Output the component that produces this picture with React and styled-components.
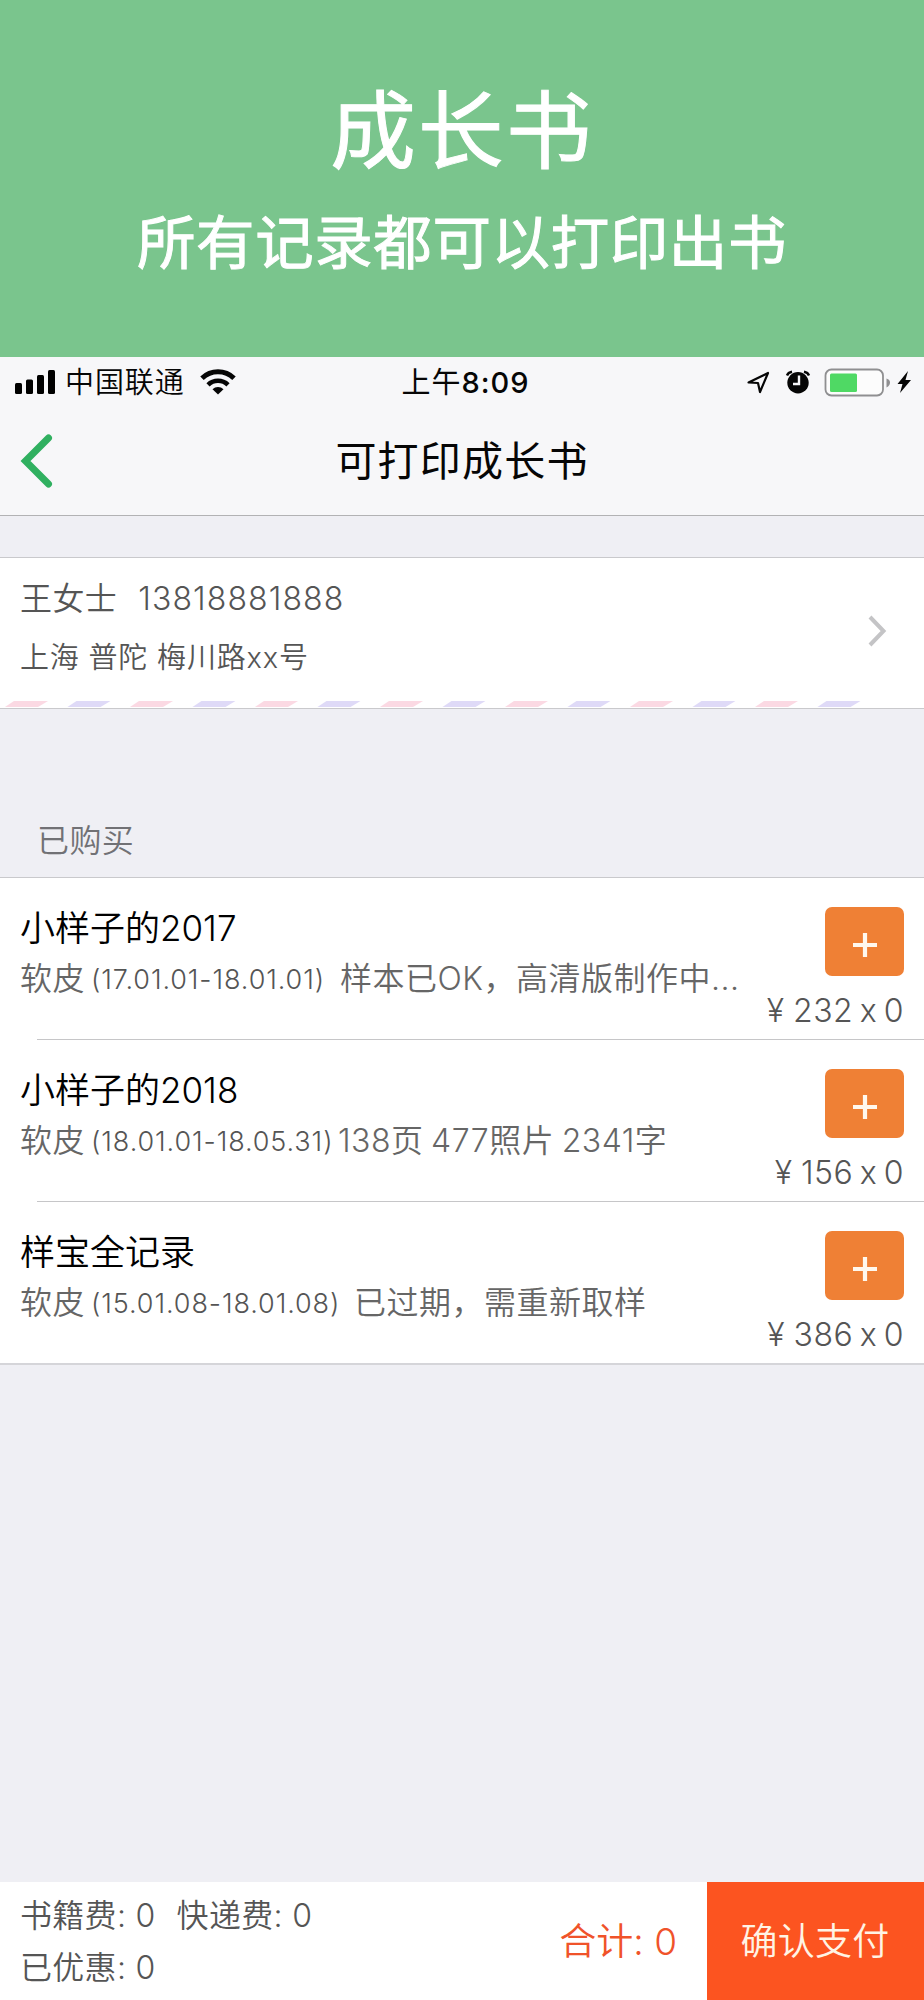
import React from "react";
import styled, { createGlobalStyle } from "styled-components";

const GlobalStyle = createGlobalStyle`
  * { box-sizing: border-box; }
  body {
    margin: 0;
    background: #efeff4;
    font-family: Inter, "Noto Sans CJK SC", sans-serif;
    font-weight: 350;
    font-feature-settings: "calt" 0;
  }
`;

const Page = styled.div`
  width: 924px;
  height: 2000px;
  display: flex;
  flex-direction: column;
  overflow: hidden;
  background: #efeff4;
  color: #555;
`;

const Banner = styled.header`
  height: 357px;
  flex: none;
  padding-top: 61px;
  background: #7ac58d;
  color: #fff;
  text-align: center;
  font-family: "Noto Sans CJK SC", sans-serif;
  font-weight: 400;
  -webkit-text-stroke: 1px #fff;
`;

const BannerTitle = styled.h1`
  margin: 0;
  font-size: 85.5px;
  line-height: 128px;
  letter-spacing: 2.4px;
  font-weight: inherit;
`;

const BannerSubtitle = styled.p`
  margin: 2px 0 0;
  font-size: 58.5px;
  line-height: 96px;
  letter-spacing: 0.6px;
`;

const TopBars = styled.div`
  height: 159px;
  flex: none;
  background: #f7f7f9;
  border-bottom: 1px solid #b2b2b4;
  color: #060606;
`;

const StatusBar = styled.div`
  height: 50px;
  display: grid;
  grid-template-columns: 1fr auto 1fr;
  align-items: center;
  padding: 0 12px 0 15px;
`;

const StatusGroup = styled.div`
  display: flex;
  align-items: center;
  justify-content: ${(p) => (p.$end ? "flex-end" : "flex-start")};
`;

const Carrier = styled.span`
  margin: 0 15px 0 9px;
  padding-top: 2px;
  font-size: 29px;
  line-height: 48px;
  letter-spacing: 0.9px;
`;

const Clock = styled.span`
  padding: 1px 0 0 4px;
  font-size: 29px;
  line-height: 49px;
  letter-spacing: 1px;
  font-weight: 500;
`;

const ClockPrefix = styled.span`
  font-weight: 400;
`;

const NavBar = styled.div`
  height: 108px;
  display: grid;
  grid-template-columns: 60px 1fr 60px;
  align-items: center;
`;

const BackIcon = styled.svg`
  margin: -1px 0 0 19px;
  display: block;
`;

const NavTitle = styled.h2`
  margin: 0;
  font-size: 41px;
  line-height: 108px;
  letter-spacing: 1.2px;
  font-weight: 400;
  text-align: center;
`;

const AddressCard = styled.section`
  height: 152px;
  flex: none;
  margin-top: 41px;
  background: #fff;
  border-top: 1px solid #c9c9cc;
  border-bottom: 1px solid #c9c9cc;
  display: flex;
  flex-direction: column;
`;

const AddressBody = styled.div`
  height: 143px;
  display: flex;
  align-items: center;
  justify-content: space-between;
  padding: 3px 37px 0 20px;
`;

const AddressText = styled.div`
  padding-bottom: 5px;
`;

const Recipient = styled.div`
  font-size: 32px;
  line-height: 58px;
  letter-spacing: 0.4px;
`;

const Phone = styled.span`
  margin-left: 21px;
  letter-spacing: 1.1px;
`;

const Street = styled.div`
  font-size: 29px;
  line-height: 59px;
  letter-spacing: 0.8px;
`;

const EnvelopeEdge = styled.svg`
  display: block;
`;

const SectionHeader = styled.h3`
  height: 168px;
  flex: none;
  margin: 0;
  padding: 108px 0 0 37px;
  font-size: 32px;
  line-height: 48px;
  letter-spacing: 0.4px;
  font-weight: 350;
  color: #717175;
`;

const BookList = styled.ul`
  margin: 0;
  padding: 0;
  flex: none;
  list-style: none;
  background: #fff;
  border-top: 1px solid #c9c9cc;
  border-bottom: 2px solid #d5d5d9;
`;

const BookRow = styled.li`
  height: 161px;
  display: flex;
  justify-content: space-between;
  padding: 23px 20px 0;
`;

const Divider = styled.li`
  height: 1px;
  margin-left: 37px;
  background: #c6c6c8;
`;

const BookInfo = styled.div`
  padding-top: 2px;
`;

const BookTitle = styled.div`
  font-size: 35px;
  line-height: 50px;
  color: #000;
`;

const BookDetail = styled.div`
  display: flex;
  align-items: baseline;
  margin-top: 1px;
  font-size: 32px;
  line-height: 50px;
  letter-spacing: 0.5px;
  word-spacing: -2px;
  color: #666;
  white-space: nowrap;
`;

const DateRange = styled.span`
  width: ${(p) => p.$width}px;
  margin-left: 6px;
  align-self: flex-start;
  font-size: 27px;
  line-height: 51px;
  letter-spacing: 0.9px;
  color: #555;
`;

const BookActions = styled.div`
  display: flex;
  flex-direction: column;
  align-items: flex-end;
  flex: none;
  width: 150px;
  margin-left: -150px;
  padding-top: 6px;
`;

const AddButton = styled.button`
  width: 79px;
  height: 69px;
  padding: 7px 0 0;
  border: 0;
  border-radius: 7px;
  background: #ef8035;
  display: flex;
  align-items: center;
  justify-content: center;
`;

const Price = styled.div`
  margin-top: 12px;
  font-size: 32px;
  line-height: 46px;
  letter-spacing: 0.5px;
  word-spacing: -3px;
  white-space: nowrap;
`;

const Currency = styled.span`
  margin-right: 2px;
`;

const Footer = styled.footer`
  height: 118px;
  flex: none;
  margin-top: auto;
  display: flex;
  background: #fff;
`;

const Fees = styled.div`
  flex: 1;
  padding: 8px 0 0 20px;
  font-size: 32px;
  line-height: 52px;
  letter-spacing: 0.3px;
`;

const FeeItem = styled.span`
  margin-right: 21px;
`;

const Total = styled.div`
  padding: 2px 30px 0 0;
  font-size: 37px;
  line-height: 116px;
  color: #f0532a;
`;

const PayButton = styled.button`
  width: 217px;
  padding: 2px 1px 0 0;
  border: 0;
  background: #fc5420;
  color: #fff3e4;
  font: inherit;
  font-size: 37px;
  line-height: 116px;
  letter-spacing: 0.3px;
`;

const BOOKS = [
  { title: "小样子的2017", dates: "(17.01.01-18.01.01)", datesWidth: 249, detail: "样本已OK，高清版制作中...", price: 232 },
  { title: "小样子的2018", dates: "(18.01.01-18.05.31)", datesWidth: 247, detail: "138页 477照片 2341字", price: 156 },
  { title: "样宝全记录", dates: "(15.01.08-18.01.08)", datesWidth: 263, detail: "已过期，需重新取样", price: 386 },
];

const STRIPES = Array.from({ length: 14 }, (_, i) => i);

function SignalIcon() {
  return (
    <svg width="41" height="26" viewBox="0 0 41 26">
      <rect x="0" y="14" width="7" height="11" rx="1.5" />
      <rect x="11" y="10.500" width="7" height="14.500" rx="1.500" />
      <rect x="22" y="6" width="7" height="19" rx="1.5" />
      <rect x="33" y="1" width="7" height="24" rx="1.5" />
    </svg>
  );
}

function WifiIcon() {
  return (
    <svg width="36" height="26" viewBox="0 0 36 26" fill="none" stroke="#060606">
      <path d="M2 9.200A23 23 0 0 1 34 9.200" strokeWidth="5" />
      <path d="M8 15.800A14.500 14.500 0 0 1 28 15.800" strokeWidth="4.600" />
      <path d="M12.500 20.200A8 8 0 0 1 23.500 20.200L18 25.500Z" fill="#060606" stroke="none" />
    </svg>
  );
}

function StatusIcons() {
  return (
    <svg width="165" height="30" viewBox="748 367 165 30">
      <path d="M749.500 382.500L769 373L761 392L759 383Z" fill="none" stroke="#060606" strokeWidth="2.200" strokeLinejoin="round" />
      <circle cx="799" cy="382.700" r="10.700" fill="#060606" />
      <path d="M788 375.500Q789 372.500 793 371.700M810 375.500Q809 372.500 805 371.700" fill="none" stroke="#060606" strokeWidth="2.400" />
      <path d="M800 375.500V384H794" fill="none" stroke="#f7f7f9" strokeWidth="2.400" />
      <rect x="826.500" y="369.500" width="57.500" height="26" rx="6" fill="#fcfcfc" stroke="#8f8f91" strokeWidth="1.800" />
      <rect x="831" y="373.500" width="27" height="18.500" rx="1.500" fill="#4fd964" />
      <path d="M887.500 378.500Q891 379.500 891 382.500T887.500 387.500Z" fill="#8f8f91" />
      <path d="M909 371L898.500 384H903.500L901 393L912 380H906.500Z" fill="#060606" />
    </svg>
  );
}

function Book({ book }) {
  return (
    <BookRow>
      <BookInfo>
        <BookTitle>{book.title}</BookTitle>
        <BookDetail>
          <span>软皮</span>
          <DateRange $width={book.datesWidth}>{book.dates}</DateRange>
          <span>{book.detail}</span>
        </BookDetail>
      </BookInfo>
      <BookActions>
        <AddButton aria-label="添加">
          <svg width="24" height="24" viewBox="0 0 24 24">
            <path d="M12 0V24M0 12H24" stroke="#fff8ee" strokeWidth="4.200" />
          </svg>
        </AddButton>
        <Price>
          <Currency>¥</Currency> {book.price} x 0
        </Price>
      </BookActions>
    </BookRow>
  );
}

export default function App() {
  return (
    <Page>
      <GlobalStyle />
      <Banner>
        <BannerTitle>成长书</BannerTitle>
        <BannerSubtitle>所有记录都可以打印出书</BannerSubtitle>
      </Banner>
      <TopBars>
        <StatusBar>
          <StatusGroup>
            <SignalIcon />
            <Carrier>中国联通</Carrier>
            <WifiIcon />
          </StatusGroup>
          <Clock>
            <ClockPrefix>上午</ClockPrefix>8:09
          </Clock>
          <StatusGroup $end>
            <StatusIcons />
          </StatusGroup>
        </StatusBar>
        <NavBar>
          <BackIcon width="36" height="54" viewBox="0 0 36 54">
            <path d="M29.500 4L6.500 27L29.500 50" fill="none" stroke="#30b060" strokeWidth="7" strokeLinecap="round" />
          </BackIcon>
          <NavTitle>可打印成长书</NavTitle>
        </NavBar>
      </TopBars>
      <AddressCard>
        <AddressBody>
          <AddressText>
            <Recipient>
              王女士<Phone>13818881888</Phone>
            </Recipient>
            <Street>上海 普陀 梅川路xx号</Street>
          </AddressText>
          <svg width="20" height="34" viewBox="0 0 20 34">
            <path d="M3 3L16.500 17L3 31" fill="none" stroke="#c4c4c6" strokeWidth="4" />
          </svg>
        </AddressBody>
        <EnvelopeEdge width="924" height="6" viewBox="0 0 924 6">
          {STRIPES.map((i) => (
            <path key={i} d="M0 6L9 0H43L33 6Z" transform={`translate(${5 + i * 62.500} 0)`} fill={i % 2 ? "#dfdaf7" : "#fbd9e3"} />
          ))}
        </EnvelopeEdge>
      </AddressCard>
      <SectionHeader>已购买</SectionHeader>
      <BookList>
        {BOOKS.map((book, i) => (
          <React.Fragment key={book.title}>
            {i > 0 && <Divider />}
            <Book book={book} />
          </React.Fragment>
        ))}
      </BookList>
      <Footer>
        <Fees>
          <div>
            <FeeItem>书籍费: 0</FeeItem>
            <FeeItem>快递费: 0</FeeItem>
          </div>
          <div>
            <FeeItem>已优惠: 0</FeeItem>
          </div>
        </Fees>
        <Total>合计: 0</Total>
        <PayButton>确认支付</PayButton>
      </Footer>
    </Page>
  );
}
